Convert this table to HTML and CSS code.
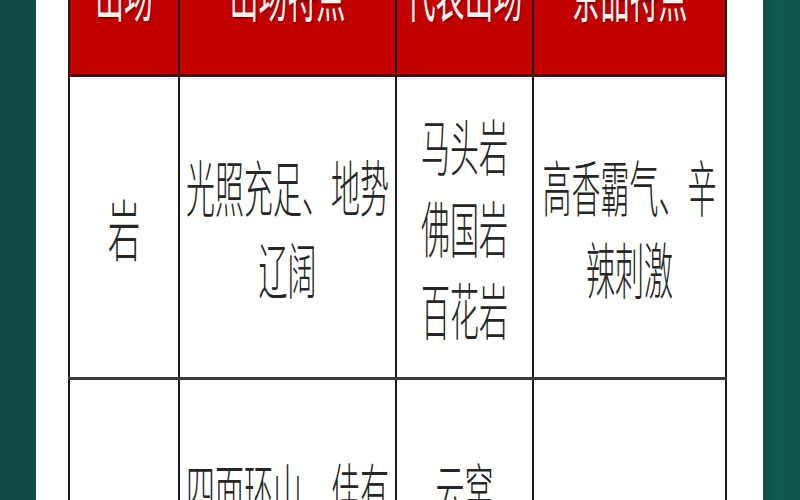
FILE: index.html
```html
<!DOCTYPE html>
<html lang="zh-CN">
<head>
<meta charset="utf-8">
<title>山场特点</title>
<link rel="stylesheet" href="styles.css">
</head>
<body>
<div class="page">
  <div class="edge edge-left"></div>
  <main class="paper">
    <table class="sheet">
      <colgroup>
        <col class="c1"><col class="c2"><col class="c3"><col class="c4">
      </colgroup>
      <thead>
        <tr>
          <th><span class="t">山场</span></th>
          <th><span class="t">山场特点</span></th>
          <th><span class="t">代表山场</span></th>
          <th><span class="t">茶品特点</span></th>
        </tr>
      </thead>
      <tbody>
        <tr class="row">
          <td class="big"><span class="t">岩</span></td>
          <td><span class="t">光照充足、地势辽阔</span></td>
          <td><span class="t">马头岩<br>佛国岩<br>百花岩</span></td>
          <td><span class="t">高香霸气、辛辣刺激</span></td>
        </tr>
        <tr class="row">
          <td class="big"><span class="t">窠</span></td>
          <td><span class="t">四面环山、佳有泉水</span></td>
          <td><span class="t">云窝<br>天心</span></td>
          <td><span class="t">花果香</span></td>
        </tr>
      </tbody>
    </table>
  </main>
  <div class="edge edge-right"></div>
</div>
</body>
</html>
```

FILE: styles.css
```css
html, body {
  margin: 0;
  padding: 0;
}

body {
  width: 800px;
  height: 500px;
  overflow: hidden;
  background: #ffffff;
  font-family: "Noto Sans CJK SC", "Noto Sans CJK JP", sans-serif;
}

.page {
  display: flex;
  width: 800px;
  height: 500px;
}

.edge {
  flex: 0 0 auto;
  height: 100%;
}

.edge-left {
  width: 36px;
  background: #0f4944;
}

.edge-right {
  width: 37px;
  background: linear-gradient(90deg, #0d5148 0, #115a51 40%, #0f554c 100%);
}

.paper {
  flex: 1 1 auto;
  background: #ffffff;
  padding-left: 32px;
  overflow: hidden;
}

.sheet {
  border-collapse: collapse;
  table-layout: fixed;
  width: 657px;
  margin-top: -88px;
}

.c1 { width: 110px; }
.c2 { width: 217px; }
.c3 { width: 137px; }
.c4 { width: 193px; }

.sheet th,
.sheet td {
  border-left: 2px solid #1c1c1c;
  border-right: 2px solid #1c1c1c;
  padding: 0 4px;
  text-align: center;
  vertical-align: middle;
}

.sheet th {
  height: 162px;
  background: #c30000;
  border-bottom: 3px solid #5c0606;
  color: #fff0f0;
  font-weight: 400;
  font-size: 29px;
  text-shadow: 1px 1px 1px rgba(90, 0, 0, 0.7);
}

.sheet th .t {
  margin-bottom: 8px;
}

.sheet td {
  height: 300px;
  color: #262626;
  font-weight: 300;
  font-size: 29px;
  border-bottom: 3px solid #3a3a3a;
}

.sheet td.big {
  font-size: 32px;
}

.t {
  display: inline-block;
  line-height: 39px;
  transform: scaleY(2.1);
  text-align: center;
}
```
